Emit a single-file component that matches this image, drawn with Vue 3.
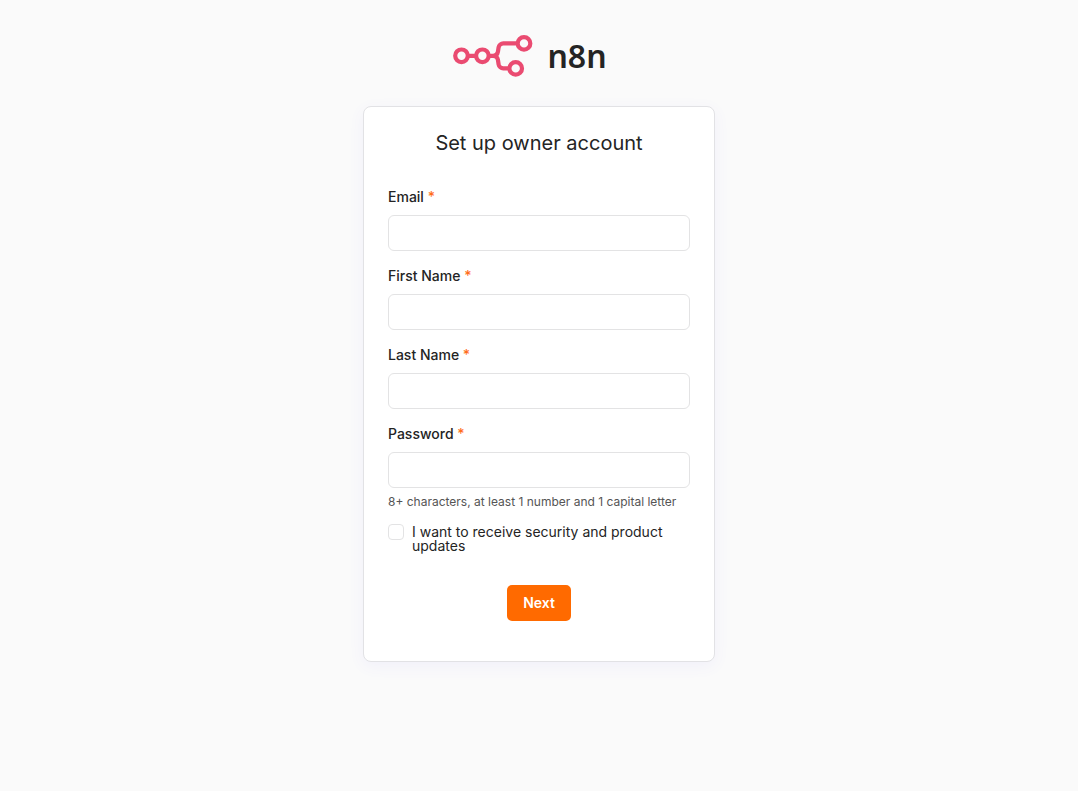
<script setup>
import { reactive, ref } from 'vue'

const fields = [
  { id: 'email', label: 'Email', type: 'email', autocomplete: 'email' },
  { id: 'firstName', label: 'First Name', type: 'text', autocomplete: 'given-name' },
  { id: 'lastName', label: 'Last Name', type: 'text', autocomplete: 'family-name' },
  {
    id: 'password',
    label: 'Password',
    type: 'password',
    autocomplete: 'new-password',
    hint: '8+ characters, at least 1 number and 1 capital letter',
  },
]

const form = reactive({ email: '', firstName: '', lastName: '', password: '' })
const agree = ref(false)
</script>

<template>
  <main class="page">
    <div class="logo">
      <svg class="mark" viewBox="0 0 80 42" width="80" height="42" fill="none" stroke="#ea4b71" stroke-width="4.2" aria-hidden="true">
        <circle cx="8.5" cy="20.8" r="6.3" />
        <circle cx="29.4" cy="20.8" r="6.3" />
        <circle cx="71" cy="8.4" r="6.3" />
        <circle cx="62.7" cy="33.4" r="6.3" />
        <path d="M15 20.8h8M36 20.8h4.2c2.3 0 4.3-1.6 4.7-3.9l.7-4.5c.4-2.3 2.4-4 4.700-4H65M40.2 20.8c2.3 0 4.3 1.6 4.7 3.9l.7 4.7c.4 2.3 2.4 4 4.700 4H56.5" />
      </svg>
      <span class="wordmark">n8n</span>
    </div>

    <form class="card" @submit.prevent>
      <h1 class="title">Set up owner account</h1>

      <div class="fields">
        <div v-for="field in fields" :key="field.id" class="field">
          <label class="label" :for="field.id">{{ field.label }} <span class="required">*</span></label>
          <input
            :id="field.id"
            v-model="form[field.id]"
            class="input"
            :type="field.type"
            :autocomplete="field.autocomplete"
            :aria-describedby="field.hint ? field.id + '-hint' : undefined"
          />
          <p v-if="field.hint" :id="field.id + '-hint'" class="hint">{{ field.hint }}</p>
        </div>
      </div>

      <div class="agreement">
        <input id="agree" v-model="agree" class="checkbox" type="checkbox" />
        <label class="agreement-label" for="agree">I want to receive security and product updates</label>
      </div>

      <div class="actions">
        <button class="button" type="submit">Next</button>
      </div>
    </form>
  </main>
</template>

<style>
body {
  background: #fafafa;
}
</style>

<style scoped>
.page {
  box-sizing: border-box;
  display: flex;
  flex-direction: column;
  align-items: center;
  gap: 29px;
  min-height: 100vh;
  padding: 35px 16px;
  color: #242424;
  font-family: Inter, "Liberation Sans", sans-serif;
}

.logo {
  display: flex;
  align-items: center;
  gap: 14px;
  height: 42px;
  padding-right: 18px;
}

.mark {
  flex: none;
}

.wordmark {
  font-family: "Noto Sans", sans-serif;
  font-size: 32px;
  font-weight: 600;
  line-height: 42px;
}

.card {
  box-sizing: border-box;
  width: 100%;
  max-width: 352px;
  padding: 24px 24px 40px;
  border: 1px solid #e2e2e5;
  border-radius: 8px;
  background: #fff;
  box-shadow: 0 4px 16px rgba(99, 77, 255, 0.06);
}

.title {
  margin: 0 0 32px;
  font-size: 20px;
  font-weight: 400;
  line-height: 24px;
  text-align: center;
}

.fields {
  display: flex;
  flex-direction: column;
  gap: 15px;
}

.field {
  display: flex;
  flex-direction: column;
}

.label {
  margin-bottom: 8px;
  font-size: 14px;
  font-weight: 500;
  line-height: 20px;
}

.required {
  color: #ff6d1a;
}

.input {
  box-sizing: border-box;
  width: 100%;
  height: 36px;
  padding: 0 12px;
  border: 1px solid #e3e3e4;
  border-radius: 6px;
  background: #fff;
  color: inherit;
  font: inherit;
  font-size: 14px;
}

.hint {
  margin: 6px 0 0;
  color: #555;
  font-size: 12px;
  line-height: 16px;
}

.agreement {
  display: flex;
  align-items: flex-start;
  gap: 8px;
  margin-top: 14px;
}

.checkbox {
  box-sizing: border-box;
  flex: none;
  width: 16px;
  height: 16px;
  margin: 0;
  border: 1px solid #e3e3e4;
  border-radius: 4px;
  background: #fff;
  appearance: none;
}

.checkbox:checked {
  border-color: #ff6a00;
  background: #ff6a00;
}

.agreement-label {
  padding-top: 1px;
  font-size: 14px;
  line-height: 14px;
}

.actions {
  display: flex;
  justify-content: center;
  margin-top: 32px;
}

.button {
  height: 36px;
  padding: 0 16px 1px;
  border: 0;
  border-radius: 5px;
  background: #ff6a00;
  color: #fff;
  font-family: inherit;
  font-size: 14px;
  font-weight: 600;
}
</style>
